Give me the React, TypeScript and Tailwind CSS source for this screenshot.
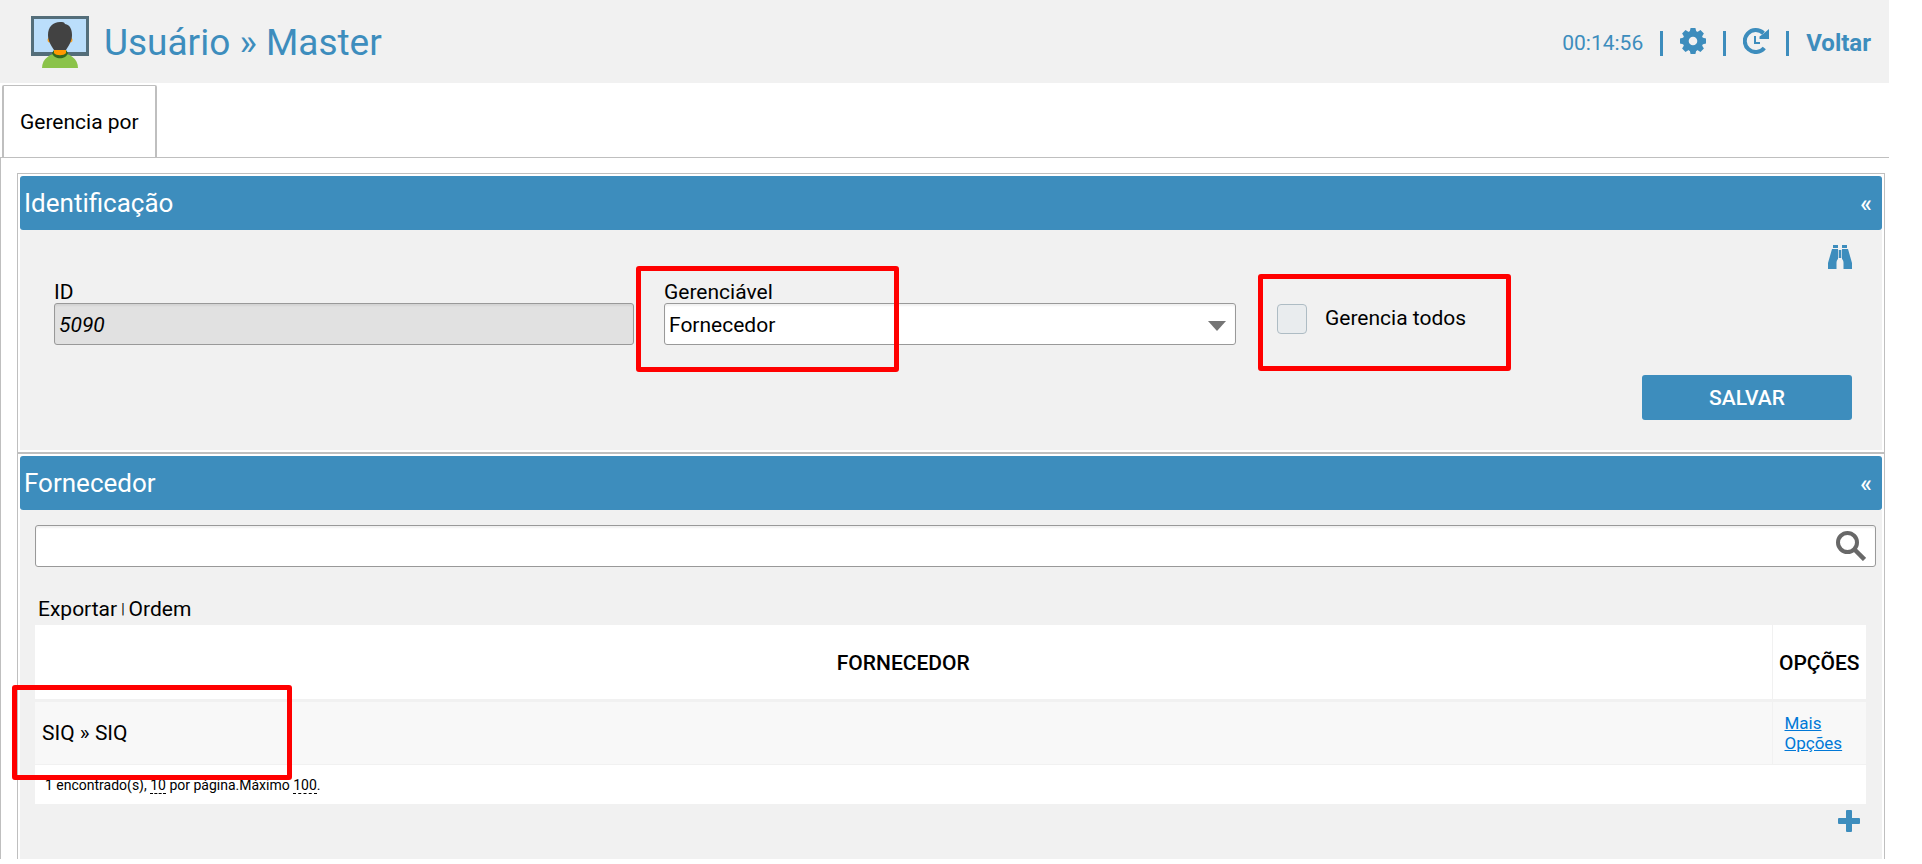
import type { ReactNode } from "react";

function UserIcon() {
  return (
    <svg className="h-[52px] w-[58px] shrink-0" viewBox="0 0 58 52" aria-hidden="true">
      <rect width="58" height="40" fill="#546e7a" />
      <rect x="3" y="3" width="52" height="33" fill="#bbdefb" />
      <path d="M11 52c0-9 8-15 18-15s18 6 18 15z" fill="#8bc34a" />
      <path d="M21 37c2 7 14 7 16 0l-2-3H23z" fill="#33691e" />
      <path d="M23 32h12v5c-2 3-10 3-12 0z" fill="#ff9800" />
      <circle cx="19" cy="24" r="2.500" fill="#ffa726" />
      <circle cx="39" cy="24" r="2.500" fill="#ffa726" />
      <path d="M29 6c3 0 4 0 5 2 5 1 7 5 7 11s-3 10-6 15H23c-3-5-6-9-6-15C17 11 22 6 29 6z" fill="#424242" />
    </svg>
  );
}

function GearIcon() {
  return (
    <svg className="size-[26px]" viewBox="0 0 26 26" fill="none" aria-hidden="true">
      <circle cx="13" cy="13" r="7.300" stroke="#3d8dbd" strokeWidth="6" />
      <g fill="#3d8dbd">
        <path d="M10.600 0h4.800l1 4h-6.800zM10.600 26h4.800l1-4h-6.800z" />
        <path d="M0 10.600v4.800l4 1V9.600zM26 10.600v4.800l-4 1V9.600z" />
        <path d="M10.600 0h4.800l1 4h-6.800zM10.600 26h4.800l1-4h-6.800z" transform="rotate(45 13 13)" />
        <path d="M0 10.600v4.800l4 1V9.600zM26 10.600v4.800l-4 1V9.600z" transform="rotate(45 13 13)" />
      </g>
    </svg>
  );
}

function RefreshIcon() {
  return (
    <svg className="size-[26px]" viewBox="0 0 26 26" fill="none" stroke="#3d8dbd" aria-hidden="true">
      <path d="M21.300 20A11 11 0 1 1 20.500 5.200" strokeWidth="4" />
      <path d="M26 1v10H16.500V8.500L20 6z" fill="#3d8dbd" stroke="none" />
      <path d="M12 8v7h5" strokeWidth="2" />
    </svg>
  );
}

function BinocularsIcon() {
  return (
    <svg className="size-6" viewBox="0 0 24 24" fill="#3d8dbd" aria-hidden="true">
      <path d="M5 0h5v3H5zM14 0h5v3h-5zM4 4h6v10c-1 1-1.500 2-1.500 4v6H0v-6zM20 4h-6v10c1 1 1.500 2 1.500 4v6H24v-6zM10.700 5h2.600v8h-2.600z" />
    </svg>
  );
}

function SearchIcon() {
  return (
    <svg className="size-[30px]" viewBox="0 0 30 30" fill="none" stroke="#686868" aria-hidden="true">
      <circle cx="11.500" cy="11.500" r="9.500" strokeWidth="4" />
      <path d="M18.500 18.500l10 10" strokeWidth="4.500" />
    </svg>
  );
}

function PlusIcon() {
  return (
    <svg className="size-[22px]" viewBox="0 0 22 22" fill="#3d8dbd" aria-hidden="true">
      <rect x="8" width="6" height="22" rx="1" />
      <rect y="8" width="22" height="6" rx="1" />
    </svg>
  );
}

function Section({ title, className, children }: { title: string; className: string; children: ReactNode }) {
  return (
    <section className={"border-[#bfbfbf] px-0.5 pt-0.5 " + className}>
      <div className="flex h-[54px] items-center justify-between rounded-[3px] bg-[#3d8dbd] pr-[10px] pl-1 text-white">
        <h2 className="text-[26px]">{title}</h2>
        <button type="button" aria-label={"Recolher " + title} className="pt-0.5 text-[24px] font-medium">
          «
        </button>
      </div>
      {children}
    </section>
  );
}

const highlight = "pointer-events-none absolute rounded-[3px] border-5 border-[#ff0000]";
const field =
  "h-[42px] w-full appearance-none rounded-[3px] border border-[#999] px-1 pt-0.5 shadow-[inset_0_2px_2px_rgba(0,0,0,0.06)]";

export default function App() {
  return (
    <div className="bg-white pr-[33px] font-['Roboto',sans-serif] text-[21px] leading-[27px] text-black">
      <header className="flex h-[83px] items-center justify-between bg-[#f1f1f1] pr-[18px] pl-[31px] text-[#3d8dbd]">
        <div className="flex items-center gap-[15px]">
          <UserIcon />
          <h1 className="pt-0.5 text-[37px] leading-none">Usuário » Master</h1>
        </div>
        <div className="flex items-center gap-[17px] pt-[3px]">
          <span>00:14:56</span>
          <span className="h-[25px] w-[3px] bg-[#3d8dbd]" />
          <button type="button" aria-label="Configurações" className="pb-[5px]">
            <GearIcon />
          </button>
          <span className="h-[25px] w-[3px] bg-[#3d8dbd]" />
          <button type="button" aria-label="Atualizar" className="pb-[5px]">
            <RefreshIcon />
          </button>
          <span className="h-[25px] w-[3px] bg-[#3d8dbd]" />
          <a href="#voltar" className="text-[24px] font-bold">
            Voltar
          </a>
        </div>
      </header>

      <nav className="flex pt-0.5 pl-0.5">
        <button type="button" className="h-[72px] rounded-t-[2px] border-x-2 border-t border-[#bfbfbf] px-4 pt-0.5">
          Gerencia por
        </button>
      </nav>

      <main className="border-t border-l border-[#bfbfbf] pt-[15px] pr-1 pl-4">
        <Section title="Identificação" className="border pb-0.5">
          <form className="h-[220px] bg-[#f1f1f1] pr-[30px] pl-[34px]" onSubmit={(e) => e.preventDefault()}>
            <div className="flex h-[42px] justify-end pt-[15px]">
              <button type="button" aria-label="Pesquisar registro" className="h-6">
                <BinocularsIcon />
              </button>
            </div>
            <div className="flex pt-2">
              <div className="mr-[30px] flex-[580] pt-[0px]">
                <label htmlFor="id" className="block pt-0.5 leading-[21px]">
                  ID
                </label>
                <input id="id" readOnly defaultValue="5090" className={field + " bg-[#e1e1e1] italic"} />
              </div>
              <div className="relative mr-[41px] flex-[572]">
                <label htmlFor="gerenciavel" className="block pt-0.5 leading-[21px]">
                  Gerenciável
                </label>
                <div className="relative">
                  <select id="gerenciavel" className={field + " bg-white"}>
                    <option>Fornecedor</option>
                  </select>
                  <svg className="pointer-events-none absolute top-[18px] right-[10px] h-[10px] w-[18px]" viewBox="0 0 18 10" fill="#757575" aria-hidden="true">
                    <path d="M0 0h18L9 10z" />
                  </svg>
                </div>
                <div className={highlight + " -top-[14px] -left-7 h-[106px] w-[263px]"} />
              </div>
              <div className="relative flex-[575] pt-6">
                <label className="flex items-start gap-[18px]">
                  <input type="checkbox" className="size-[30px] appearance-none rounded-[4px] border border-[#aebcc4] bg-[#e9ecee]" />
                  <span className="leading-[29px]">Gerencia todos</span>
                </label>
                <div className={highlight + " -top-[6px] -left-[19px] h-[97px] w-[253px]"} />
              </div>
            </div>
            <div className="flex justify-end pt-[30px]">
              <button type="submit" className="h-[45px] w-[210px] rounded-[3px] bg-[#3d8dbd] pt-0.5 font-medium text-white">
                SALVAR
              </button>
            </div>
          </form>
        </Section>

        <Section title="Fornecedor" className="border-x border-t">
          <div className="h-[349px] bg-[#f1f1f1] pt-[15px] pl-[15px]">
            <div className="relative mr-[6px]">
              <input type="search" aria-label="Pesquisar fornecedor" className={field + " block bg-white"} />
              <button type="button" aria-label="Pesquisar" className="absolute top-[6px] right-[10px]">
                <SearchIcon />
              </button>
            </div>
            <div className="flex items-center gap-1 pt-[29px] pb-0.5 pl-[3px]">
              <a href="#exportar">Exportar</a>
              <span className="text-[14px]">|</span>
              <a href="#ordem">Ordem</a>
            </div>
            <div className="relative mr-4 bg-white">
              <table className="w-full border-collapse">
                <thead>
                  <tr className="h-[75px] border-b-3 border-[#f1f1f1]">
                    <th className="border-r border-[#f1f1f1] pt-[3px] font-medium">FORNECEDOR</th>
                    <th className="w-[94px] pt-[3px] font-medium">OPÇÕES</th>
                  </tr>
                </thead>
                <tbody>
                  <tr className="h-[64px] border-b border-[#f1f1f1] bg-[#f8f8f8]">
                    <td className="border-r border-[#f1f1f1] pt-0.5 pl-[7px]">SIQ » SIQ</td>
                    <td className="pl-3 text-[17px] leading-5">
                      <a href="#mais" className="block w-16 text-[#0078d7] underline">
                        Mais Opções
                      </a>
                    </td>
                  </tr>
                </tbody>
              </table>
              <p className="flex h-[39px] items-center pt-0.5 pl-[10px] text-[14px] leading-4 whitespace-pre">
                1 encontrado(s), <span className="border-b border-dashed border-black">10</span> por página.Máximo{" "}
                <span className="border-b border-dashed border-black">100</span>.
              </p>
              <div className={highlight + " top-[60px] -left-[23px] h-[95px] w-[280px]"} />
            </div>
            <div className="flex justify-end pt-[6px] pr-[22px]">
              <button type="button" aria-label="Adicionar fornecedor">
                <PlusIcon />
              </button>
            </div>
          </div>
        </Section>
      </main>
    </div>
  );
}
